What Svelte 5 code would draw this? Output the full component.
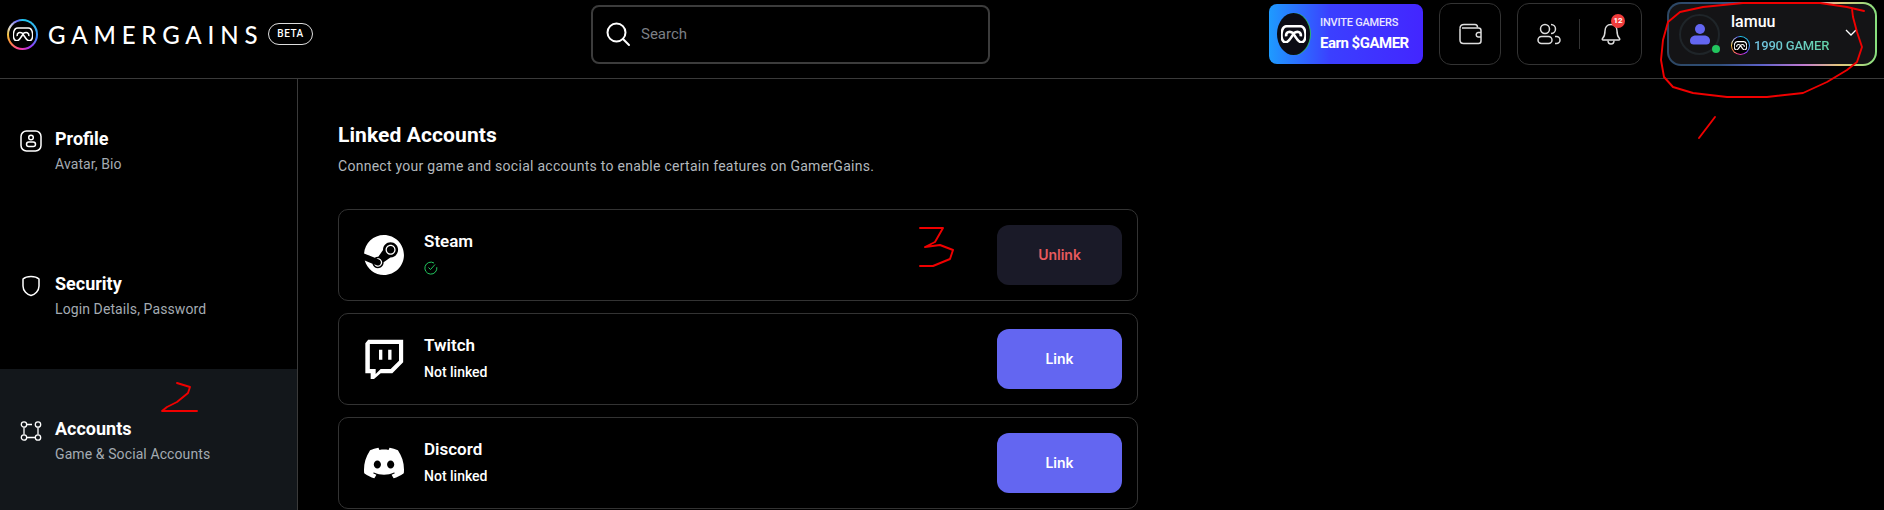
<script>
  const nav = [
    { key: 'profile', title: 'Profile', sub: 'Avatar, Bio' },
    { key: 'security', title: 'Security', sub: 'Login Details, Password' },
    { key: 'accounts', title: 'Accounts', sub: 'Game & Social Accounts', active: true }
  ];

  const accounts = [
    { key: 'steam', name: 'Steam', linked: true },
    { key: 'twitch', name: 'Twitch', linked: false },
    { key: 'discord', name: 'Discord', linked: false }
  ];

  // hand traced marker scribbles from the screenshot
  const scribbles = [
    'M1864 11 L1847 7 L1820 3 L1787 3 L1743 3 L1703 7 L1680 12 L1668 22 L1663 40 L1661 60 L1664 77 L1673 87 L1693 93 L1727 97 L1767 97 L1803 93 L1827 82 L1847 70 L1857 62 L1862 47 L1857 32 L1853 17 L1852 9',
    'M1715 117 L1699 138',
    'M177 383 L190 387 L188 393 L177 402 L167 407 L162 411 L197 411',
    'M920 228 L943 228 L935 242 L925 247 L940 245 L953 250 L950 259 L933 266 L920 266'
  ];
</script>

{#snippet pad(size, weight = 2)}
  <svg class="pad" width={size} height={size * 0.74} viewBox="1.500 4 21 15.500" fill="none" stroke="#fff" stroke-width={weight} stroke-linejoin="round">
    <path d="M6.500 5h11c2.800 0 4 2.200 4.500 5.500.6 4.500-.8 8-3.400 8-3 0-4.600-4.500-6.600-7-2 2.500-3.600 7-6.600 7-2.600 0-4-3.500-3.400-8C2.500 7.200 3.700 5 6.500 5z" />
    <path d="M5.800 13.500c-.3-3.500 2.700-5 6.200-2.500 3.500-2.500 6.500-1 6.200 2.500" />
  </svg>
{/snippet}

<div class="page">
  <header>
    <div class="brand">
      <span class="ring big"><span class="ring-in">{@render pad(20, 1.600)}</span></span>
      <span class="wordmark">GAMERGAINS</span>
      <span class="beta">BETA</span>
    </div>

    <div class="search">
      <svg width="26" height="26" viewBox="0 0 26 26" fill="none" stroke="#fff" stroke-width="2" stroke-linecap="round">
        <circle cx="11.500" cy="11.500" r="9" />
        <path d="M18 18l6 6" />
      </svg>
      <span>Search</span>
    </div>

    <div class="actions">
      <div class="invite">
        <span class="invite-logo">{@render pad(25, 2.200)}</span>
        <div class="invite-text">
          <span class="invite-top">INVITE GAMERS</span>
          <span class="invite-bottom">Earn $GAMER</span>
        </div>
      </div>

      <div class="box wallet">
        <svg width="24" height="22" viewBox="0 0 24 22" fill="none" stroke="#ddd" stroke-width="1.500" stroke-linejoin="round">
          <path d="M2 5.500C2 3 3.500 1.500 6 1.500h11c1.500 0 2.500 1 2.500 3" />
          <path d="M2 5.500V17c0 2 1.500 3.500 3.500 3.500h15c1.500 0 2.500-1 2.500-2.500V7.500C23 6 22 5 20.500 5H4" />
          <path d="M23 9.500h-3a2.300 2.300 0 000 4.500h3" />
        </svg>
      </div>

      <div class="box social">
        <span class="cell">
          <svg width="24" height="22" viewBox="0 0 24 22" fill="none" stroke="#ddd" stroke-width="1.500">
            <circle cx="8" cy="6" r="4.500" />
            <rect x="1" y="13.500" width="14" height="7" rx="3.500" />
            <path d="M14 1.500a4.500 4.500 0 010 9" />
            <path d="M18 13.500h1.500a3.500 3.500 0 010 7H18" />
          </svg>
        </span>
        <span class="sep"></span>
        <span class="cell bell">
          <svg width="20" height="22" viewBox="0 0 20 22" fill="none" stroke="#ddd" stroke-width="1.500" stroke-linejoin="round">
            <path d="M10 1.500c-4 0-6 3-6 6.500 0 4-1 6-2.500 7.500-.6.700-.2 1.500.7 1.500h15.600c.9 0 1.300-.8.700-1.500C17 14 16 12 16 8c0-3.500-2-6.500-6-6.500z" />
            <path d="M7 17.500c0 2 1.300 3.500 3 3.500s3-1.500 3-3.500" />
          </svg>
          <span class="badge">12</span>
        </span>
      </div>

      <div class="user">
        <div class="avatar">
          <svg width="20" height="22" viewBox="0 0 20 22" fill="#6366f1">
            <circle cx="10" cy="6" r="5" />
            <path d="M0 18c0-4 3-5.500 6-5.500h8c3 0 6 1.500 6 5.500 0 2.500-1.500 3.500-3.500 3.500h-13C1.500 21.500 0 20.500 0 18z" />
          </svg>
          <span class="online"></span>
        </div>
        <div class="user-text">
          <span class="user-name">lamuu</span>
          <span class="user-bal">
            <span class="ring small"><span class="ring-in">{@render pad(13, 1.800)}</span></span>
            <span class="gamer">1990 GAMER</span>
          </span>
        </div>
        <svg class="chev" width="12" height="8" viewBox="0 0 12 8" fill="none" stroke="#fff" stroke-width="1.300">
          <path d="M1 1l5 5 5-5" />
        </svg>
      </div>
    </div>
  </header>

  <div class="body">
    <aside>
      {#each nav as item}
        <div class="nav-item" class:active={item.active}>
          <span class="nav-icon">
            {#if item.key === 'profile'}
              <svg width="22" height="22" viewBox="0 0 22 22" fill="none" stroke="#fff" stroke-width="1.500">
                <rect x="1" y="1" width="20" height="20" rx="5.500" />
                <circle cx="11" cy="7.500" r="2.300" />
                <rect x="6.500" y="12" width="9" height="4.500" rx="2.250" />
              </svg>
            {:else if item.key === 'security'}
              <svg width="22" height="22" viewBox="0 0 22 22" fill="none" stroke="#fff" stroke-width="1.500" stroke-linejoin="round">
                <path d="M11 1.500c3 0 6 .7 8 2.500v7c0 5-4 8.500-8 9.500-4-1-8-4.500-8-9.500V4c2-1.800 5-2.500 8-2.500z" />
              </svg>
            {:else}
              <svg width="22" height="22" viewBox="0 0 22 22" fill="none" stroke="#fff" stroke-width="1.300">
                <circle cx="4" cy="4.500" r="2.700" />
                <circle cx="18" cy="4.500" r="2.700" />
                <circle cx="4" cy="17.500" r="2.700" />
                <circle cx="18" cy="17.500" r="2.700" />
                <path d="M7 4.500h5M18 7.500v7M4 7.500v7M7 17.500h8" />
              </svg>
            {/if}
          </span>
          <div>
            <div class="nav-title">{item.title}</div>
            <div class="nav-sub">{item.sub}</div>
          </div>
        </div>
      {/each}
    </aside>

    <main>
      <h1>Linked Accounts</h1>
      <p class="lead">Connect your game and social accounts to enable certain features on GamerGains.</p>

      <div class="cards">
        {#each accounts as acc}
          <div class="card">
            <span class="brand-icon">
              {#if acc.key === 'steam'}
                <svg width="40" height="40" viewBox="0 0 24 24" fill="#fff">
                  <path d="M11.979 0C5.678 0 .511 4.86.022 11.037l6.432 2.658c.545-.371 1.203-.59 1.912-.59.063 0 .125.004.188.006l2.861-4.142V8.91c0-2.495 2.028-4.524 4.524-4.524 2.494 0 4.524 2.031 4.524 4.527s-2.03 4.525-4.524 4.525h-.105l-4.076 2.911c0 .052.004.105.004.159 0 1.875-1.515 3.396-3.39 3.396-1.635 0-3.016-1.173-3.331-2.727L.436 15.27C1.862 20.307 6.486 24 11.979 24c6.627 0 11.999-5.373 11.999-12S18.605 0 11.979 0zM7.54 18.21l-1.473-.61c.262.543.714.999 1.314 1.25 1.297.539 2.793-.076 3.332-1.375.263-.63.264-1.319.005-1.949s-.75-1.121-1.377-1.383c-.624-.26-1.29-.249-1.878-.03l1.523.63c.956.4 1.409 1.5 1.009 2.455-.397.957-1.497 1.41-2.454 1.012H7.54zm11.415-9.303c0-1.662-1.353-3.015-3.015-3.015-1.665 0-3.015 1.353-3.015 3.015 0 1.665 1.35 3.015 3.015 3.015 1.663 0 3.015-1.35 3.015-3.015zm-5.273-.005c0-1.252 1.013-2.266 2.265-2.266 1.249 0 2.266 1.014 2.266 2.266 0 1.251-1.017 2.265-2.266 2.265-1.253 0-2.265-1.014-2.265-2.265z" />
                </svg>
              {:else if acc.key === 'twitch'}
                <svg width="40" height="40" viewBox="0 0 24 24" fill="#fff" fill-rule="evenodd">
                  <path d="M2.500.5H23.500V14L17 20.500H10L6 24H4V20.500H.8V2.500zM3.500 3V18H7V21L10 18H16L21 13V3zM9 6.500h2v6H9zM14.500 6.500h2v6h-2z" />
                </svg>
              {:else}
                <svg width="40" height="40" viewBox="0 0 24 24" fill="#fff">
                  <path d="M20.317 4.3698a19.7913 19.7913 0 00-4.8851-1.5152.0741.0741 0 00-.0785.0371c-.211.3753-.4447.8648-.6083 1.2495-1.8447-.2762-3.68-.2762-5.4868 0-.1636-.3933-.4058-.8742-.6177-1.2495a.077.077 0 00-.0785-.037 19.7363 19.7363 0 00-4.8852 1.515.0699.0699 0 00-.0321.0277C.5334 9.0458-.319 13.5799.0992 18.0578a.0824.0824 0 00.0312.0561c2.0528 1.5076 4.0413 2.4228 5.9929 3.0294a.0777.0777 0 00.0842-.0276c.4616-.6304.8731-1.2952 1.226-1.9942a.076.076 0 00-.0416-.1057c-.6528-.2476-1.2743-.5495-1.8722-.8923a.077.077 0 01-.0076-.1277c.1258-.0943.2517-.1923.3718-.2914a.0743.0743 0 01.0776-.0105c3.9278 1.7933 8.18 1.7933 12.0614 0a.0739.0739 0 01.0785.0095c.1202.099.246.1981.3728.2924a.077.077 0 01-.0066.1276 12.2986 12.2986 0 01-1.873.8914.0766.0766 0 00-.0407.1067c.3604.698.7719 1.3628 1.225 1.9932a.076.076 0 00.0842.0286c1.961-.6067 3.9495-1.5219 6.0023-3.0294a.077.077 0 00.0313-.0552c.5004-5.177-.8382-9.6739-3.5485-13.6604a.061.061 0 00-.0312-.0286zM8.02 15.3312c-1.1825 0-2.1569-1.0857-2.1569-2.419 0-1.3332.9555-2.4189 2.157-2.4189 1.2108 0 2.1757 1.0952 2.1568 2.419 0 1.3332-.9555 2.4189-2.1569 2.4189zm7.9748 0c-1.1825 0-2.1569-1.0857-2.1569-2.419 0-1.3332.9554-2.4189 2.1569-2.4189 1.2108 0 2.1757 1.0952 2.1568 2.419 0 1.3332-.946 2.4189-2.1568 2.4189Z" />
                </svg>
              {/if}
            </span>
            <div class="acc-text">
              <div class="acc-name">{acc.name}</div>
              {#if acc.linked}
                <svg class="check" width="14" height="14" viewBox="0 0 14 14" fill="none" stroke="#22c55e" stroke-width="1">
                  <path d="M12.800 6.200A6 6 0 1110 2" />
                  <path d="M4.500 6.500l2 2 4.500-5" />
                </svg>
              {:else}
                <div class="acc-status">Not linked</div>
              {/if}
            </div>
            <button class:unlink={acc.linked}>{acc.linked ? 'Unlink' : 'Link'}</button>
          </div>
        {/each}
      </div>
    </main>
  </div>

  <svg class="marks" viewBox="0 0 1884 510" fill="none" stroke="#f00000" stroke-width="1.900" stroke-linecap="round" stroke-linejoin="round">
    {#each scribbles as d}
      <path {d} />
    {/each}
  </svg>
</div>

<style>
  :global(body) {
    margin: 0;
    background: #000;
  }
  .page {
    position: relative;
    width: 1884px;
    height: 510px;
    overflow: hidden;
    background: #000;
    color: #fff;
    font-family: Roboto, "Noto Sans", sans-serif;
  }
  header {
    display: flex;
    align-items: center;
    height: 68px;
    padding: 0 7px 10px;
    border-bottom: 1px solid #3a3a3a;
  }
  .brand {
    display: flex;
    align-items: center;
    width: 305px;
  }
  .ring {
    display: flex;
    flex: none;
    border-radius: 50%;
    background: conic-gradient(#1cc8ee, #35b6f0 60deg, #3f8cff 100deg, #a034f5 150deg, #ff3ca0 190deg, #ff8f3c 240deg, #f5c542 270deg, #ddd 300deg, #6a6aff 340deg, #1cc8ee);
  }
  .ring.big {
    width: 31px;
    height: 31px;
    padding: 2px;
    box-sizing: border-box;
  }
  .ring.small {
    width: 19px;
    height: 19px;
    padding: 1px;
    box-sizing: border-box;
  }
  .ring-in {
    flex: 1;
    display: flex;
    align-items: center;
    justify-content: center;
    border-radius: 50%;
    background: #000;
  }
  .wordmark {
    margin-left: 10px;
    font-family: Lato, sans-serif;
    font-size: 24px;
    font-weight: 500;
    letter-spacing: 5.85px;
    white-space: nowrap;
  }
  .beta {
    margin-left: 5px;
    padding: 0 8px;
    height: 20px;
    line-height: 20px;
    border: 1px solid #ddd;
    border-radius: 11px;
    font-size: 10px;
    font-weight: 500;
    letter-spacing: 0.5px;
  }
  .search {
    display: flex;
    align-items: center;
    gap: 10px;
    width: 399px;
    height: 59px;
    margin-left: 279px;
    padding-left: 12px;
    box-sizing: border-box;
    border: 2px solid #3c3c3c;
    border-radius: 8px;
    color: #7b7f85;
    font-size: 15px;
  }
  .actions {
    display: flex;
    align-items: center;
    margin-left: auto;
  }
  .invite {
    display: flex;
    align-items: center;
    width: 154px;
    height: 60px;
    padding-left: 8px;
    box-sizing: border-box;
    border-radius: 8px;
    background: linear-gradient(90deg, #1e9bff 0, #3b3fff 40%, #4326ff 100%);
  }
  .invite-logo {
    display: flex;
    align-items: center;
    justify-content: center;
    width: 33px;
    height: 42px;
    border-radius: 50%;
    background: #0b0b14;
    box-shadow: 1px 0 0 #2fb46a;
  }
  .invite-text {
    display: flex;
    flex-direction: column;
    margin-left: 10px;
    line-height: 1;
  }
  .invite-top {
    font-size: 11px;
    font-weight: 500;
    color: #e9e6ff;
    letter-spacing: -0.2px;
  }
  .invite-bottom {
    margin-top: 8px;
    font-size: 15px;
    font-weight: 700;
    letter-spacing: -0.5px;
  }
  .box {
    display: flex;
    align-items: center;
    height: 62px;
    box-sizing: border-box;
    border: 1px solid #333;
    border-radius: 12px;
  }
  .wallet {
    justify-content: center;
    width: 62px;
    margin-left: 16px;
  }
  .social {
    width: 125px;
    margin-left: 16px;
  }
  .cell {
    position: relative;
    display: flex;
    flex: 1;
    justify-content: center;
  }
  .sep {
    width: 1px;
    height: 30px;
    background: #333;
  }
  .badge {
    position: absolute;
    top: -9px;
    left: 31px;
    width: 14px;
    height: 14px;
    line-height: 14px;
    border-radius: 50%;
    background: #ef3b3b;
    text-align: center;
    font-size: 8px;
    font-weight: 700;
  }
  .user {
    display: flex;
    align-items: center;
    width: 210px;
    height: 64px;
    margin-left: 25px;
    padding-left: 10px;
    box-sizing: border-box;
    border: 2px solid transparent;
    border-radius: 14px;
    background:
      linear-gradient(#141416, #141416) padding-box,
      linear-gradient(90deg, #2d4763 0, #2f4f7a 25%, #5d62c9 45%, #c07ad0 65%, #e5c77c 82%, #86e07e 100%) border-box;
  }
  .avatar {
    position: relative;
    display: flex;
    align-items: center;
    justify-content: center;
    width: 41px;
    height: 41px;
    box-sizing: border-box;
    border: 2px solid #1f2529;
    border-radius: 50%;
  }
  .online {
    position: absolute;
    right: -2px;
    bottom: 0;
    width: 8px;
    height: 8px;
    border-radius: 50%;
    background: #22c55e;
  }
  .user-text {
    display: flex;
    flex-direction: column;
    margin-left: 11px;
  }
  .user-name {
    font-size: 16px;
    font-weight: 500;
    line-height: 18px;
  }
  .user-bal {
    display: flex;
    align-items: center;
    gap: 4px;
    margin-top: 5px;
  }
  .gamer {
    font-size: 13px;
    font-weight: 500;
    letter-spacing: -0.2px;
    background: linear-gradient(90deg, #74c6e8, #63d3a8);
    background-clip: text;
    -webkit-background-clip: text;
    color: transparent;
  }
  .chev {
    margin-left: auto;
    margin-right: 18px;
    margin-bottom: 2px;
  }
  .body {
    display: flex;
  }
  aside {
    width: 297px;
    height: 431px;
    flex: none;
    border-right: 1px solid #3a3a3a;
  }
  .nav-item {
    display: flex;
    gap: 13px;
    height: 145px;
    padding: 49px 0 0 20px;
    box-sizing: border-box;
  }
  .nav-item.active {
    background: #13171b;
  }
  .nav-icon {
    display: flex;
    margin-top: 2px;
  }
  .nav-title {
    font-size: 18px;
    font-weight: 700;
    line-height: 22px;
  }
  .nav-sub {
    margin-top: 4px;
    font-size: 14px;
    line-height: 20px;
    letter-spacing: 0.1px;
    color: #a4abb2;
  }
  main {
    width: 800px;
    padding: 42px 0 0 40px;
  }
  h1 {
    margin: 0;
    font-size: 21px;
    font-weight: 700;
    line-height: 28px;
    letter-spacing: 0.1px;
  }
  .lead {
    margin: 7px 0 33px;
    font-size: 14px;
    line-height: 20px;
    letter-spacing: 0.27px;
    color: #b3b8bd;
  }
  .cards {
    display: flex;
    flex-direction: column;
    gap: 12px;
  }
  .card {
    display: flex;
    align-items: center;
    height: 92px;
    padding: 0 15px 0 25px;
    box-sizing: border-box;
    border: 1px solid #333;
    border-radius: 10px;
  }
  .brand-icon {
    display: flex;
    width: 40px;
  }
  .acc-text {
    margin-left: 20px;
    margin-bottom: 2px;
  }
  .acc-name {
    font-size: 17px;
    font-weight: 600;
    line-height: 22px;
  }
  .acc-status {
    margin-top: 6px;
    font-size: 14px;
    font-weight: 500;
    line-height: 20px;
  }
  .check {
    display: block;
    margin-top: 9px;
    margin-bottom: 3px;
  }
  button {
    width: 125px;
    height: 60px;
    margin-left: auto;
    padding-bottom: 2px;
    border: none;
    border-radius: 12px;
    background: #6366f1;
    color: #fff;
    font-family: Inter, sans-serif;
    font-size: 14px;
    font-weight: 600;
  }
  button.unlink {
    background: #1a1a28;
    color: #e85a5e;
  }
  .marks {
    position: absolute;
    inset: 0;
    width: 1884px;
    height: 510px;
    pointer-events: none;
  }
</style>
